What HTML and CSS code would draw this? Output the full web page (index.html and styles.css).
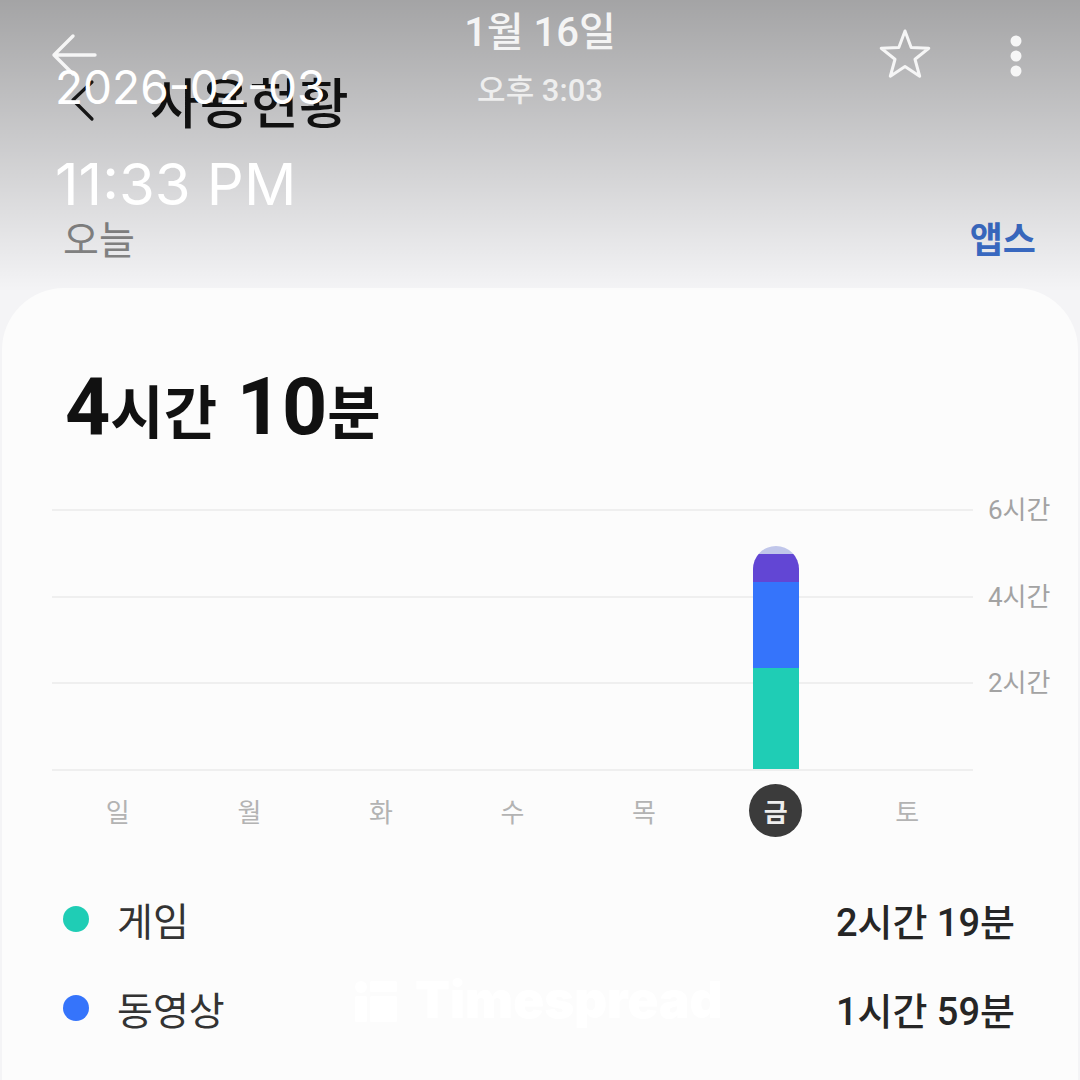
FILE: index.html
```html
<!DOCTYPE html>
<html lang="ko">
<head>
<meta charset="utf-8">
<title>사용현황</title>
<link rel="stylesheet" href="styles.css">
</head>
<body>
<div class="app">
  <div class="topbar">
    <svg class="chev" viewBox="0 0 26 44" width="26" height="44"><path d="M22 3 L3 21 L22 40" fill="none" stroke="#1c1c1c" stroke-width="3.2" stroke-linecap="round" stroke-linejoin="round"/></svg>
    <h1 class="title">사용현황</h1>
  </div>
  <div class="subbar">
    <span class="today">오늘</span>
    <span class="apps">앱스</span>
  </div>
  <section class="card">
    <div class="total"><span class="num">4</span><span class="unit">시간</span><span class="num"> 10</span><span class="unit">분</span></div>
    <div class="chart">
      <div class="rules">
        <div class="rule"><i class="line"></i><span class="tick">6시간</span></div>
        <div class="rule"><i class="line"></i><span class="tick">4시간</span></div>
        <div class="rule"><i class="line"></i><span class="tick">2시간</span></div>
        <div class="rule"><i class="line"></i></div>
      </div>
      <div class="bars">
        <div class="col"></div>
        <div class="col"></div>
        <div class="col"></div>
        <div class="col"></div>
        <div class="col"></div>
        <div class="col">
          <div class="bar">
            <span class="seg s-other" style="height:8px"></span>
            <span class="seg s-purple" style="height:28px"></span>
            <span class="seg s-blue" style="height:86px"></span>
            <span class="seg s-green" style="height:101px"></span>
          </div>
        </div>
        <div class="col"></div>
      </div>
      <div class="days">
        <span class="day">일</span>
        <span class="day">월</span>
        <span class="day">화</span>
        <span class="day">수</span>
        <span class="day">목</span>
        <span class="day on">금</span>
        <span class="day">토</span>
      </div>
    </div>
    <ul class="legend">
      <li class="row"><span class="dot d-green"></span><span class="lbl">게임</span><span class="val">2시간 19분</span></li>
      <li class="row"><span class="dot d-blue"></span><span class="lbl">동영상</span><span class="val">1시간 59분</span></li>
    </ul>
  </section>
</div>

<div class="shade"></div>

<header class="viewer">
  <svg class="back" viewBox="0 0 48 44" width="48" height="44"><path d="M4 22 H45 M4 22 L23 3 M4 22 L23 41" fill="none" stroke="#f6f6f6" stroke-width="3.4" stroke-linecap="round" stroke-linejoin="round"/></svg>
  <div class="when">
    <div class="date">1월 16일</div>
    <div class="clock">오후 3:03</div>
  </div>
  <div class="tools">
    <svg class="star" viewBox="0 0 52 52" width="52" height="52"><path d="M26 3 L32.17 19.51 L49.78 20.27 L35.99 31.24 L40.69 48.23 L26 38.5 L11.31 48.23 L16.01 31.24 L2.22 20.27 L19.83 19.51 Z" fill="none" stroke="#f6f6f6" stroke-width="3" stroke-linejoin="round"/></svg>
    <svg class="kebab" viewBox="0 0 24 44" width="24" height="44"><circle cx="12" cy="7" r="5.5" fill="#f6f6f6"/><circle cx="12" cy="22" r="5.5" fill="#f6f6f6"/><circle cx="12" cy="37" r="5.5" fill="#f6f6f6"/></svg>
  </div>
</header>

<div class="stamp">
  <span class="s-date">2026-02-03</span>
  <span class="s-time">11:33 PM</span>
</div>

<div class="watermark">
  <svg class="wm-icon" viewBox="0 0 42 41" width="42" height="41"><circle cx="6" cy="6" r="6" fill="#fff"/><rect x="0" y="15" width="12" height="26" rx="1.5" fill="#fff"/><rect x="15" y="0" width="27" height="11" rx="1.5" fill="#fff"/><rect x="15" y="15" width="27" height="26" rx="1.5" fill="#fff"/></svg>
  <span class="wm-text">Timespread</span>
</div>
</body>
</html>
```

FILE: styles.css
```css
* { box-sizing: border-box; margin: 0; padding: 0; }
html, body { width: 1080px; height: 1080px; overflow: hidden; }
body {
  position: relative;
  background: #f4f4f6;
  font-family: "Roboto", "Noto Sans CJK KR", sans-serif;
}

.app { padding-top: 69px; height: 1080px; overflow: hidden; }

.topbar { display: flex; align-items: center; height: 64px; padding-left: 70px; }
.chev { display: block; flex: none; }
.title {
  margin-left: 54px;
  font-family: "Noto Sans CJK KR", sans-serif;
  font-size: 54px; font-weight: 500; line-height: 64px; color: #151515;
}

.subbar {
  display: flex; justify-content: space-between; align-items: center;
  height: 48px; margin-top: 80px; padding: 0 44px 0 63px;
  font-family: "Noto Sans CJK KR", sans-serif;
}
.today { font-size: 39px; color: #868686; line-height: 48px; }
.apps { font-size: 36px; font-weight: 700; color: #3b6dc8; line-height: 48px; }

.card {
  margin: 27px 2px 0;
  height: 820px;
  background: #fcfcfc;
  border-radius: 62px 62px 0 0;
  padding: 79px 20px 0 50px;
}

.total {
  height: 80px; line-height: 80px; padding-left: 13px;
  color: #111; font-weight: 700; white-space: pre;
}
.num { font-family: "Roboto", sans-serif; font-size: 79px; }
.unit { font-family: "Noto Sans CJK KR", sans-serif; font-size: 58px; }

.chart {
  display: grid;
  grid-template-columns: 921px 1fr;
  margin-top: 62px;
}
.rules {
  grid-row: 1; grid-column: 1 / 3;
  height: 262px;
  display: flex; flex-direction: column; justify-content: space-between;
}
.rule { display: flex; align-items: center; height: 2px; }
.line { display: block; flex: none; width: 921px; height: 2px; background: #efefef; }
.tick {
  margin-left: 15px; font-size: 26px; line-height: 30px; color: #a3a3a3; white-space: nowrap;
  font-family: "Roboto", "Noto Sans CJK KR", sans-serif;
}
.bars {
  grid-row: 1; grid-column: 1;
  display: grid; grid-template-columns: repeat(7, 1fr);
  align-items: end; justify-items: center;
  padding-bottom: 2px;
}
.bar {
  width: 46px; display: flex; flex-direction: column;
  border-radius: 23px 23px 0 0; overflow: hidden;
}
.seg { display: block; }
.s-other { background: #c0c6ea; }
.s-purple { background: #6246d4; }
.s-blue { background: #3574fb; }
.s-green { background: #1fcdb5; }

.days {
  grid-row: 2; grid-column: 1;
  display: grid; grid-template-columns: repeat(7, 1fr); justify-items: center;
  margin-top: 13px;
}
.day {
  width: 53px; height: 53px; border-radius: 50%;
  display: flex; align-items: center; justify-content: center;
  font-family: "Noto Sans CJK KR", sans-serif;
  font-size: 26px; color: #b3b3b3;
}
.day.on { background: #3b3b3b; color: #eeeeee; font-weight: 700; }

.legend {
  list-style: none; margin-top: 52px; padding: 0 43px 0 11px;
  display: flex; flex-direction: column; gap: 29px;
}
.row { display: flex; align-items: center; height: 60px; }
.dot { flex: none; width: 26px; height: 26px; border-radius: 50%; margin-right: 28px; }
.d-green { background: #1fcdb5; }
.d-blue { background: #3574fb; }
.lbl { font-family: "Noto Sans CJK KR", sans-serif; font-size: 39px; color: #333; }
.val { margin-left: auto; font-size: 38px; font-weight: 500; color: #262626; }

.shade {
  position: absolute; left: 0; top: 0; width: 1080px; height: 292px;
  background: linear-gradient(rgba(0,0,0,0.33), rgba(0,0,0,0));
  pointer-events: none;
}

.viewer {
  position: absolute; left: 0; top: 0; width: 1080px; height: 120px;
  display: grid; grid-template-columns: 1fr auto 1fr;
  padding: 0 50px;
  color: #f4f4f4;
  font-family: "Roboto", "Noto Sans CJK KR", sans-serif;
}
.back { display: block; margin-top: 33px; }
.when { text-align: center; padding-top: 9px; font-weight: 500; }
.date { font-size: 40px; line-height: 48px; }
.clock { font-size: 31px; line-height: 40px; margin-top: 14px; color: #eeeeee; }
.tools { justify-self: end; display: flex; align-items: flex-start; gap: 73px; margin-right: 2px; }
.star { display: block; margin-top: 28px; }
.kebab { display: block; margin-top: 34px; }

.stamp {
  position: absolute; left: 55px; top: 64px;
  display: flex; flex-direction: column; gap: 45px;
  color: #ffffff; font-family: "Inter", sans-serif; line-height: 1;
}
.s-date { font-size: 46px; }
.s-time { font-size: 58px; }

.watermark {
  position: absolute; left: 355px; top: 981px;
  display: flex; align-items: flex-start; gap: 18px;
}
.wm-icon { display: block; }
.wm-text {
  font-family: "Inter", sans-serif; font-weight: 900;
  font-size: 51px; line-height: 1; color: #ffffff; margin-top: -7px;
}
```
